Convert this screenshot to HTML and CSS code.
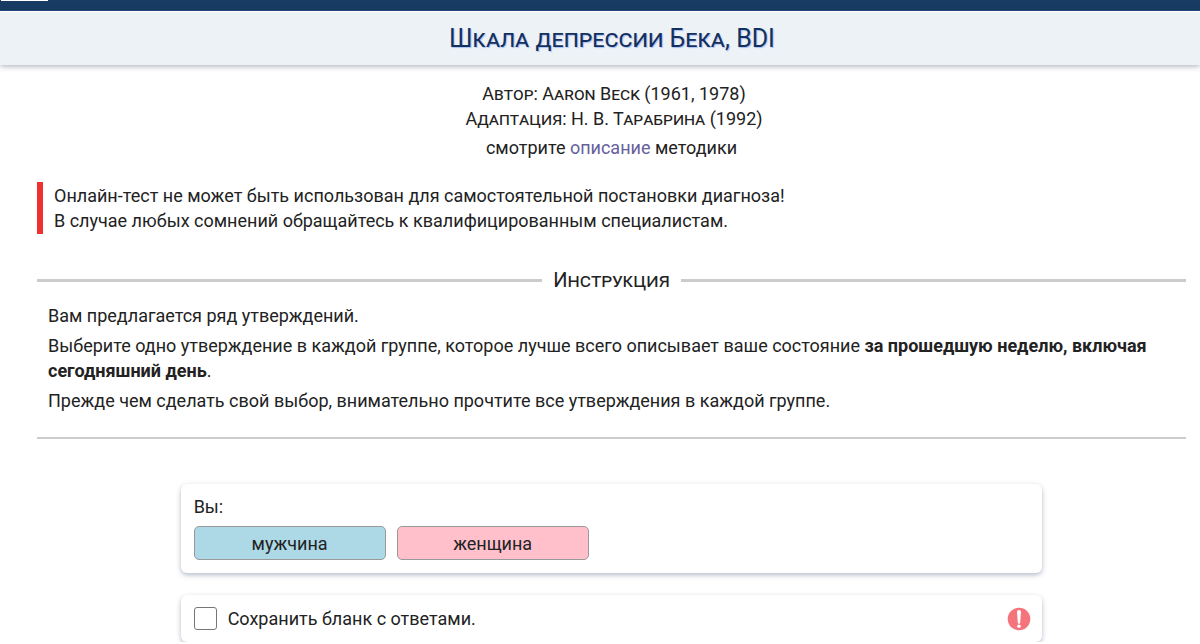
FILE: index.html
```html
<!DOCTYPE html>
<html lang="ru">
<head>
<meta charset="UTF-8" />
<meta name="viewport" content="width=device-width, initial-scale=1" />
<title>Шкала депрессии Бека, BDI</title>
<link rel="stylesheet" href="styles.css">
</head>
<body>

<div class="topbar">
  <div class="topbar-tab"></div>
</div>

<header class="header">
  <h1>Шкала депрессии Бека, BDI</h1>
</header>

<main class="content">
  <div class="about">
    <p class="authors">Автор: Aaron Beck (1961, 1978)<br>Адаптация: Н. В. Тарабрина (1992)</p>
    <p>смотрите <a href="#">описание</a> методики</p>
  </div>

  <div class="warning">
    Онлайн-тест не может быть использован для самостоятельной постановки диагноза!<br>
    В случае любых сомнений обращайтесь к квалифицированным специалистам.
  </div>

  <section class="instruction">
    <h2>Инструкция</h2>
    <p>Вам предлагается ряд утверждений.</p>
    <p>Выберите одно утверждение в каждой группе, которое лучше всего описывает ваше состояние <b>за прошедшую неделю, включая сегодняшний день</b>.</p>
    <p>Прежде чем сделать свой выбор, внимательно прочтите все утверждения в каждой группе.</p>
  </section>

  <form class="form">
    <div class="card">
      <div id="sexLabel">Вы:</div>
      <div class="buttons" role="group" aria-labelledby="sexLabel">
        <button type="button" class="male">мужчина</button>
        <button type="button" class="female">женщина</button>
      </div>
    </div>

    <div class="card save">
      <input type="checkbox" id="save" />
      <label for="save">Сохранить бланк с ответами.</label>
      <svg class="alert" viewBox="0 0 24 24" width="24" height="24" aria-hidden="true">
        <circle cx="12" cy="12" r="11.3" fill="#f5747b" />
        <path d="M10 5a2 2 0 0 1 4 0l-.8 10.5a1.2 1.2 0 0 1-2.4 0z" fill="#fff" />
        <circle cx="12" cy="19.2" r="1.8" fill="#fff" />
      </svg>
    </div>
  </form>
</main>

</body>
</html>
```
FILE: styles.css
```css
* {
  box-sizing: border-box;
}
body {
  margin: 0;
  font-family: Roboto, "Noto Sans", sans-serif;
  font-size: 18px;
  line-height: 25px;
  color: #222;
  background: #fff;
}
p {
  margin: 0 0 5px;
}
a {
  color: #66609c;
  text-decoration: none;
}
.topbar {
  height: 11px;
  padding-left: 1px;
  background: #173b63;
  border-bottom: 1px solid #1f4a7c;
}
.topbar-tab {
  width: 47px;
  height: 1px;
  background: #fff;
}
.header {
  padding: 13px 13px 12px 37px;
  border-top: 1px solid #fff;
  background: #edf2f7;
  box-shadow: 0 1px 6px rgba(30, 45, 70, 0.4);
}
h1 {
  margin: 0;
  font-size: 25px;
  line-height: 28px;
  font-weight: normal;
  font-variant: small-caps;
  text-align: center;
  color: #14315c;
  text-shadow: 1px 1px 1px #a9c0f5;
}
.content {
  padding: 16px 14px 0 37px;
}
.about {
  margin-bottom: 22px;
  text-align: center;
}
.authors {
  margin-bottom: 4px;
  padding-left: 5px;
  font-variant: small-caps;
}
.warning {
  padding: 1px 0 1px 11px;
  border-left: 6px solid #ee3030;
}
.instruction {
  margin-top: 34px;
  padding-bottom: 19px;
  border-bottom: 2px solid #ccc;
}
.instruction p {
  padding: 0 11px;
}
h2 {
  display: flex;
  align-items: center;
  gap: 11px;
  margin: 0 0 10px;
  font-size: 20px;
  font-weight: normal;
  font-variant: small-caps;
}
h2::before,
h2::after {
  content: "";
  flex: 1;
  height: 3px;
  background: #ccc;
}
.form {
  display: flex;
  flex-direction: column;
  gap: 22px;
  width: 75%;
  margin: 45px auto 0;
}
.card {
  padding: 10px 13px 13px;
  border-radius: 6px;
  background: #fff;
  box-shadow: 0 2px 5px rgba(40, 65, 100, 0.35);
}
.buttons {
  display: flex;
  gap: 11px;
  margin-top: 7px;
}
button {
  width: 192px;
  height: 34px;
  padding: 0;
  border: 1px solid #999;
  border-radius: 5px;
  font: inherit;
  color: #222;
  cursor: pointer;
}
.male {
  background: lightblue;
}
.female {
  background: pink;
}
.save {
  display: flex;
  align-items: center;
  gap: 11px;
  padding: 11px;
  padding-left: 13px;
}
.save input {
  appearance: none;
  width: 23px;
  height: 23px;
  margin: 0;
  border: 1px solid #767676;
  border-radius: 3px;
  background: #fff;
}
.save input:checked {
  background: #173b63;
}
.alert {
  margin-left: auto;
}
```
